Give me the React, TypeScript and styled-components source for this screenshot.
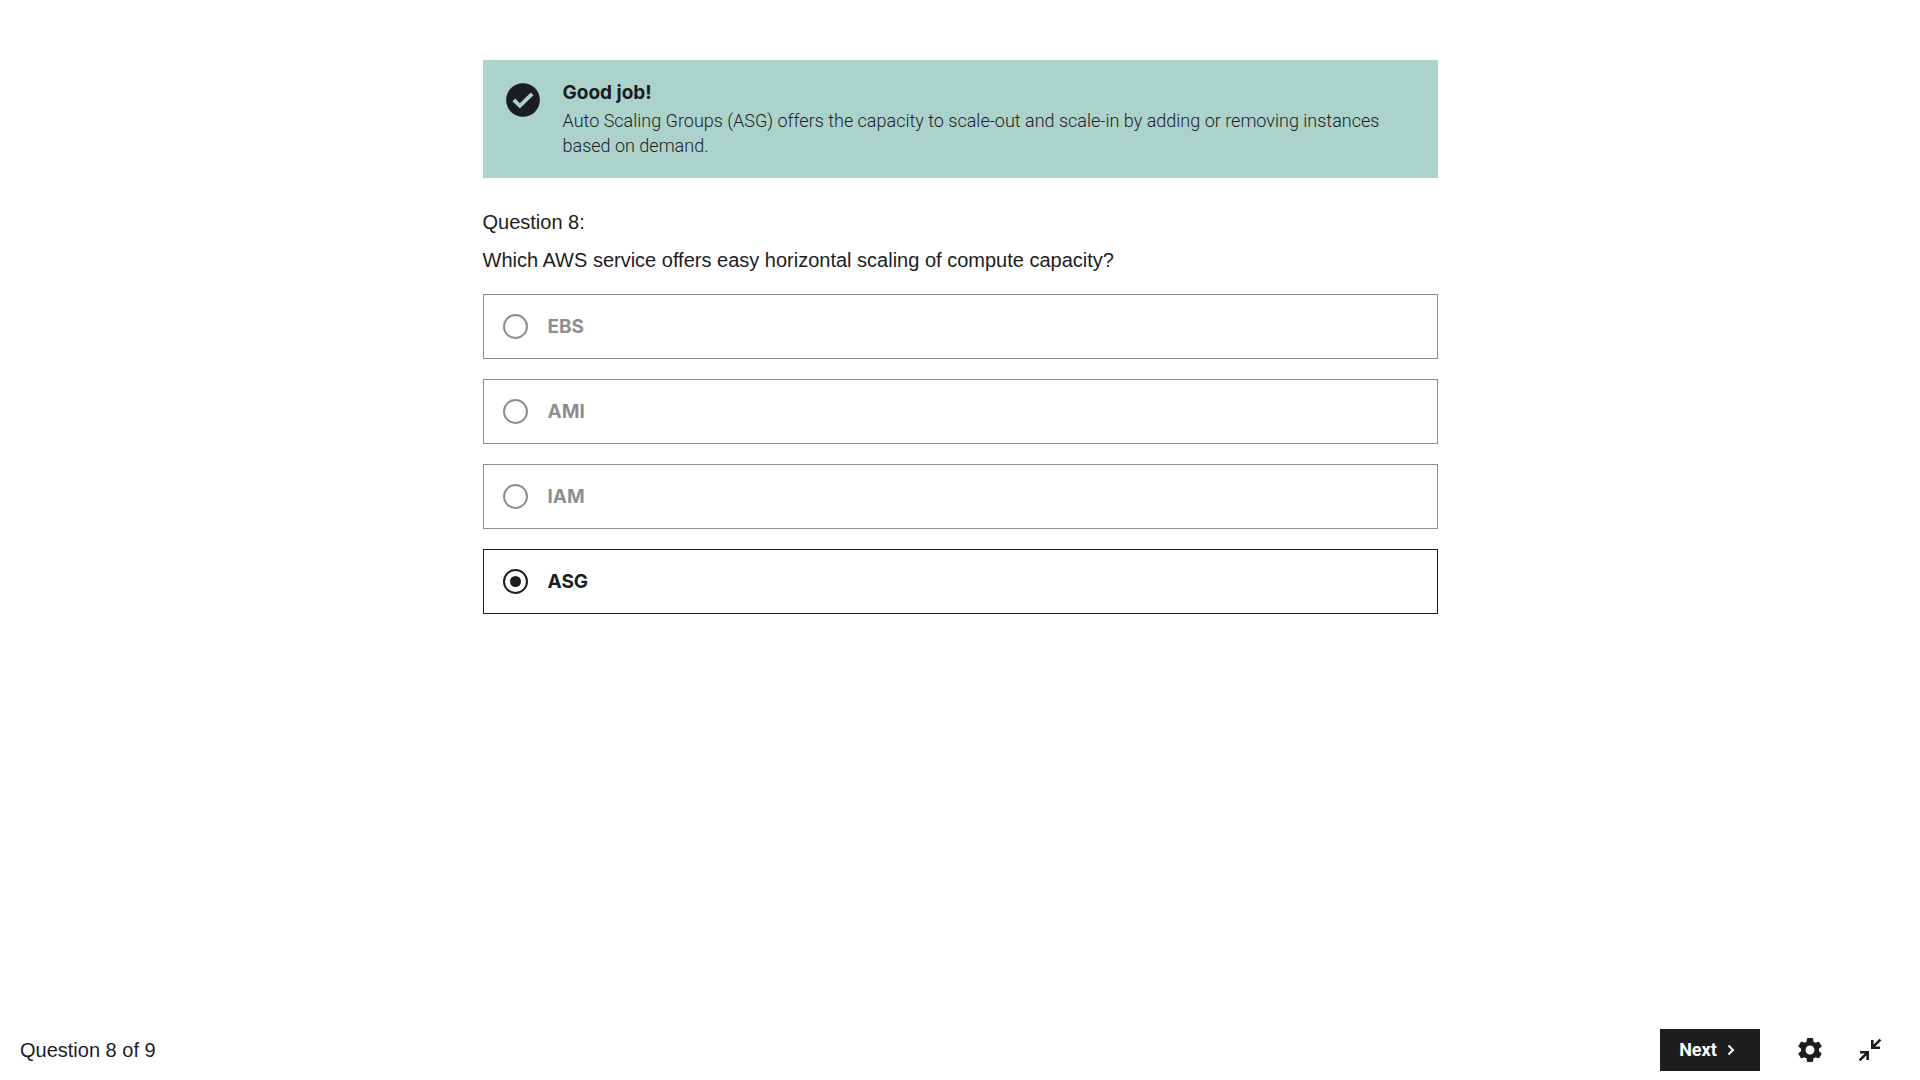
import React from 'react';
import styled, { createGlobalStyle } from 'styled-components';

const ink = '#1c1d1f';
const textFont = '"Liberation Sans", Arial, sans-serif';
const boldFont = 'Inter, "Liberation Sans", sans-serif';
const lightFont = 'Roboto, "Liberation Sans", sans-serif';

const GlobalStyle = createGlobalStyle`
  *, *::before { box-sizing: border-box; }
  body { margin: 0; background: #fff; color: ${ink}; font-family: ${textFont}; }
`;

const Page = styled.div`
  display: flex;
  flex-direction: column;
  min-height: 100vh;
`;

const Content = styled.main`
  flex: 1;
  width: 100%;
  max-width: 995px;
  margin: 0 auto;
  padding: 60px 20px;
`;

const Banner = styled.section`
  display: flex;
  align-items: flex-start;
  gap: 20px;
  padding: 20px;
  margin-bottom: 30px;
  background: #acd2cc;
`;

const BannerIcon = styled.svg`
  flex: none;
  width: 40px;
  height: 40px;
  fill: ${ink};
`;

const BannerTitle = styled.h2`
  margin: 0 0 2px;
  font: 700 19px/26px ${boldFont};
`;

const BannerText = styled.p`
  margin: 0;
  font: 300 18px/25px ${lightFont};
`;

const Question = styled.fieldset`
  margin: 0;
  padding: 0;
  border: 0;
  min-width: 0;
`;

const Prompt = styled.legend`
  display: block;
  padding: 0;
  margin-bottom: 20px;
  font-size: 20px;
  line-height: 28px;
`;

const PromptLine = styled.span`
  display: block;
  & + & { margin-top: 10px; }
`;

const Answers = styled.div`
  display: flex;
  flex-direction: column;
  gap: 20px;
`;

const Answer = styled.label<{ $active: boolean }>`
  display: flex;
  align-items: center;
  gap: 20px;
  height: 65px;
  padding: 0 19px;
  border: 1px solid ${ink};
  font: 700 19px/28px ${boldFont};
  opacity: ${p => (p.$active ? 1 : 0.5)};
`;

const Radio = styled.input`
  appearance: none;
  display: grid;
  place-items: center;
  flex: none;
  width: 25px;
  height: 25px;
  margin: 0;
  border: 2px solid ${ink};
  border-radius: 50%;

  &:checked::before {
    content: '';
    width: 11px;
    height: 11px;
    border-radius: 50%;
    background: ${ink};
  }
`;

const Footer = styled.footer`
  display: flex;
  align-items: center;
  justify-content: space-between;
  padding: 9px 20px;
`;

const Progress = styled.span`
  font-size: 20px;
  line-height: 28px;
`;

const Actions = styled.div`
  display: flex;
  align-items: center;
`;

const NextButton = styled.button`
  display: flex;
  align-items: center;
  justify-content: center;
  gap: 4px;
  min-width: 100px;
  height: 42px;
  margin-right: 20px;
  padding: 0 18px;
  border: 0;
  background: ${ink};
  color: #fff;
  font: 700 18px/24px ${lightFont};
  cursor: pointer;
`;

const Chevron = styled.svg`
  width: 20px;
  height: 20px;
  fill: none;
  stroke: currentColor;
  stroke-width: 2;
`;

const IconButton = styled.button`
  display: grid;
  place-items: center;
  width: 60px;
  height: 42px;
  padding: 0;
  border: 0;
  background: none;
  color: ${ink};
  cursor: pointer;
`;

const ActionIcon = styled.svg`
  width: 30px;
  height: 30px;
`;

const options = ['EBS', 'AMI', 'IAM', 'ASG'];
const chosen = 'ASG';

export default function App() {
  return (
    <Page>
      <GlobalStyle />
      <Content>
        <Banner role="status">
          <BannerIcon viewBox="0 0 24 24" aria-hidden="true">
            <path d="M12 1.9a10.1 10.1 0 1 0 0 20.2 10.1 10.1 0 0 0 0-20.2zM10.1 17.1 5.7 12.7l1.6-1.6 2.8 2.8 6.6-6.4 1.6 1.6z" />
          </BannerIcon>
          <div>
            <BannerTitle>Good job!</BannerTitle>
            <BannerText>
              Auto Scaling Groups (ASG) offers the capacity to scale-out and scale-in by adding or
              removing instances based on demand.
            </BannerText>
          </div>
        </Banner>
        <Question>
          <Prompt>
            <PromptLine>Question 8:</PromptLine>
            <PromptLine>Which AWS service offers easy horizontal scaling of compute capacity?</PromptLine>
          </Prompt>
          <Answers>
            {options.map(name => (
              <Answer key={name} htmlFor={`answer-${name}`} $active={name === chosen}>
                <Radio
                  type="radio"
                  id={`answer-${name}`}
                  name="answer"
                  value={name}
                  defaultChecked={name === chosen}
                  disabled={name !== chosen}
                />
                {name}
              </Answer>
            ))}
          </Answers>
        </Question>
      </Content>
      <Footer>
        <Progress>Question 8 of 9</Progress>
        <Actions>
          <NextButton type="button">
            Next
            <Chevron viewBox="0 0 20 20" aria-hidden="true">
              <path d="M7.5 5.5 12 10l-4.500 4.500" />
            </Chevron>
          </NextButton>
          <IconButton type="button" aria-label="Settings">
            <ActionIcon viewBox="0 0 24 24" fill="currentColor" aria-hidden="true">
              <path d="M19.14 12.94c.04-.3.06-.61.06-.94 0-.32-.02-.64-.07-.94l2.03-1.58c.18-.14.23-.41.12-.61l-1.92-3.32c-.12-.22-.37-.29-.59-.22l-2.39.96c-.5-.38-1.03-.7-1.62-.94l-.36-2.54c-.04-.24-.24-.41-.48-.41h-3.84c-.24 0-.43.17-.47.41l-.36 2.54c-.59.24-1.13.57-1.62.94l-2.39-.96c-.22-.08-.47 0-.59.22L2.74 8.87c-.12.21-.08.47.12.61l2.03 1.58c-.05.3-.09.63-.09.94s.02.64.07.94l-2.03 1.58c-.18.14-.23.41-.12.61l1.92 3.32c.12.22.37.29.59.22l2.39-.96c.5.38 1.03.7 1.62.94l.36 2.54c.05.24.24.41.48.41h3.84c.24 0 .44-.17.47-.41l.36-2.54c.59-.24 1.13-.56 1.62-.94l2.39.96c.22.08.47 0 .59-.22l1.92-3.32c.12-.22.07-.47-.12-.61zM12 15.6c-1.98 0-3.6-1.62-3.6-3.6s1.62-3.6 3.6-3.6 3.6 1.62 3.6 3.6-1.62 3.6-3.6 3.6z" />
            </ActionIcon>
          </IconButton>
          <IconButton type="button" aria-label="Exit fullscreen">
            <ActionIcon viewBox="0 0 30 30" fill="none" stroke="currentColor" strokeWidth="2.6" aria-hidden="true">
              <path d="M17.3 5v7.7H25M25.4 4.6l-8.1 8.1M5 17.3h7.7V25M4.6 25.4l8.1-8.1" />
            </ActionIcon>
          </IconButton>
        </Actions>
      </Footer>
    </Page>
  );
}
